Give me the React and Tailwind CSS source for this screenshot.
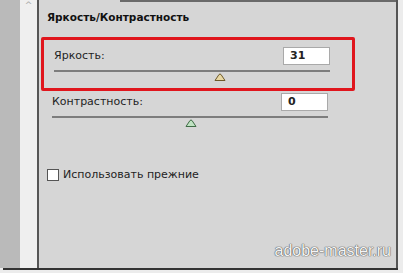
import React from "react";

function Thumb({ fill, stroke }) {
  return (
    <svg width="12" height="8" viewBox="0 0 12 8" className="block">
      <path d="M1 7.5 L5 1.5 Q6 0.5 7 1.5 L11 7.5 Z" fill={fill} stroke={stroke} strokeWidth="1" />
    </svg>
  );
}

function SliderRow({ label, value, thumbLeft, fill, stroke }) {
  return (
    <div className="w-[276px]">
      <div className="flex items-center justify-between h-[18px]">
        <span>{label}</span>
        <div className="w-[47px] h-[18px] bg-white border border-[#a9a9a9] flex items-center pl-[6px] text-[11px] font-bold text-[#222]">
          {value}
        </div>
      </div>
      <div className="mt-[5px] h-[2px] bg-[#7d7d7d]" />
      <div className="h-[9px] pt-[1px]" style={{ paddingLeft: thumbLeft }}>
        <Thumb fill={fill} stroke={stroke} />
      </div>
    </div>
  );
}

export default function App() {
  return (
    <div className="w-[403px] h-[273px] bg-[#ececec] flex flex-col overflow-hidden font-['DejaVu_Sans',sans-serif] text-[11px] text-[#1e1e1e]">
      <div className="flex h-[268px]">
        <div className="w-[20px] bg-[#bababa]" />
        <div className="w-[17px] bg-[#efefef] flex justify-center">
          <span className="text-[9px] leading-none text-[#aaa] mt-[1px]">^</span>
        </div>
        <div className="w-[2px] bg-[#555]" />
        <div className="relative w-[357px] bg-[#d6d6d6] flex flex-col">
          <div className="ml-[81px] h-[2px] bg-[#6a6a6a]" />
          <div className="pl-[8px] pt-[8px] text-[10.5px] font-bold text-[#111]">Яркость/Контрастность</div>
          <div className="ml-[2px] mt-[11px] w-[314px] h-[54px] border-[3px] border-[#e0161d] rounded-[2px] pl-[10px] pt-[7px]">
            <SliderRow label="Яркость:" value="31" thumbLeft={160} fill="#e8d7a2" stroke="#6e5a2a" />
          </div>
          <div className="pl-[13px] pt-[2px]">
            <SliderRow label="Контрастность:" value="0" thumbLeft={133} fill="#bfe3c2" stroke="#3f6b45" />
          </div>
          <div className="pl-[8px] mt-[40px] flex items-center gap-[4px]">
            <div className="w-[12px] h-[12px] bg-white border border-[#555]" />
            <span>Использовать прежние</span>
          </div>
          <div className="absolute right-[5px] bottom-[5px] font-['Liberation_Sans',sans-serif] text-[16px] text-[#f4f4f4] [text-shadow:0_0_1px_#555,0_0_1px_#555,0_0_1px_#777]">
            adobe-master.ru
          </div>
        </div>
        <div className="w-[2px] bg-[#555]" />
        <div className="flex-1 bg-[#ececec]" />
      </div>
      <div className="ml-[3px] mr-[5px] h-[2px] bg-[#333]" />
    </div>
  );
}
